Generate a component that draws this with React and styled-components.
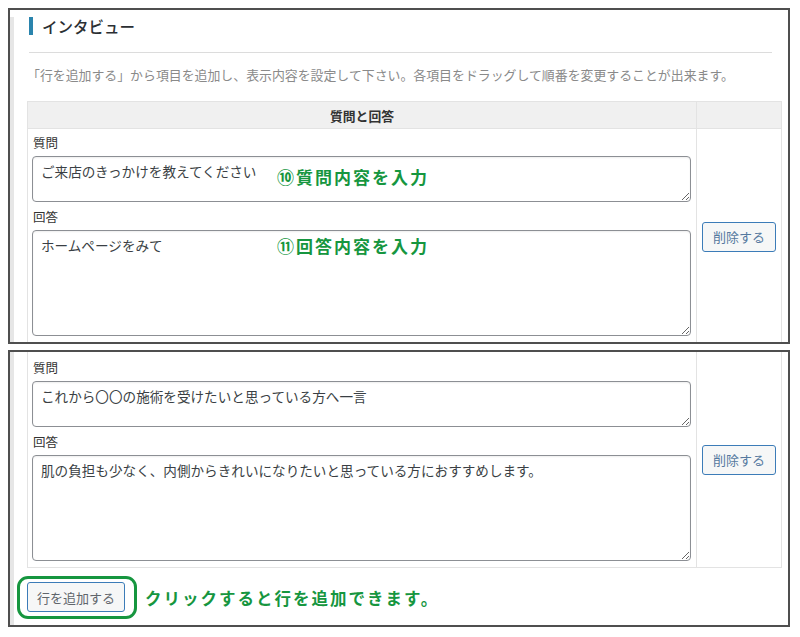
import React from 'react';
import styled, { createGlobalStyle } from 'styled-components';

const GlobalStyle = createGlobalStyle`
  body {
    margin: 0;
    background: #fff;
    font-family: "Noto Sans CJK JP", "Noto Sans", sans-serif;
  }
`;

export default function App() {
  return (
    <>
      <GlobalStyle />
      <Page>
        <Frame height={336}>
          <Inner>
            <Title>
              <TitleBar />
              <TitleText>インタビュー</TitleText>
            </Title>
            <Rule />
            <Description>
              「行を追加する」から項目を追加し、表示内容を設定して下さい。各項目をドラッグして順番を変更することが出来ます。
            </Description>
            <Table>
              <Columns />
              <thead>
                <tr>
                  <HeadCell>質問と回答</HeadCell>
                  <HeadCell />
                </tr>
              </thead>
              <tbody>
                <QaRow
                  question="ご来店のきっかけを教えてください"
                  answer="ホームページをみて"
                  questionNote="⑩質問内容を入力"
                  answerNote="⑪回答内容を入力"
                />
              </tbody>
            </Table>
          </Inner>
        </Frame>

        <Frame height={277}>
          <Inner>
            <Table noTop>
              <Columns />
              <tbody>
                <QaRow
                  lead={8}
                  question="これから〇〇の施術を受けたいと思っている方へ一言"
                  answer="肌の負担も少なく、内側からきれいになりたいと思っている方におすすめします。"
                />
              </tbody>
            </Table>
            <Footer>
              <Ring>
                <Button tone="gray" wide>行を追加する</Button>
              </Ring>
              <FooterNote>クリックすると行を追加できます。</FooterNote>
            </Footer>
          </Inner>
        </Frame>
      </Page>
    </>
  );
}

function Columns() {
  return (
    <colgroup>
      <col style={{ width: 669 }} />
      <col style={{ width: 85 }} />
    </colgroup>
  );
}

function QaRow({ question, answer, questionNote, answerNote, lead = 6 }) {
  return (
    <tr>
      <FieldCell lead={lead}>
        <Label>質問</Label>
        <Field>
          <Area height={46} defaultValue={question} />
          {questionNote && <Note top={11}>{questionNote}</Note>}
        </Field>
        <Label spaced>回答</Label>
        <Field>
          <Area height={106} defaultValue={answer} />
          {answerNote && <Note top={6}>{answerNote}</Note>}
        </Field>
      </FieldCell>
      <ActionCell>
        <Button>削除する</Button>
      </ActionCell>
    </tr>
  );
}

const Page = styled.div`
  padding: 8px;
  display: flex;
  flex-direction: column;
  gap: 6px;
`;

const Frame = styled.div`
  width: 782px;
  height: ${(p) => p.height}px;
  box-sizing: border-box;
  border: 2px solid #4f4f4f;
  overflow: hidden;
  background: #fff;
`;

const Inner = styled.div`
  height: 100%;
  box-sizing: border-box;
  border-left: 4px solid #e6e6e6;
  padding: 0 7px 0 13px;
`;

const Title = styled.div`
  display: flex;
  align-items: center;
  gap: 9px;
  margin: 7px 0 0 2px;
  height: 18px;
`;

const TitleBar = styled.span`
  width: 4px;
  height: 18px;
  background: #2a84ad;
`;

const TitleText = styled.span`
  font-size: 15.5px;
  line-height: 18px;
  font-weight: 500;
  color: #2b2f33;
`;

const Rule = styled.div`
  margin: 17px 9px 0 2px;
  border-top: 1px solid #dcdcdc;
`;

const Description = styled.p`
  margin: 13px 0 0;
  font-size: 12.9px;
  line-height: 18px;
  color: #8a8a8a;
  white-space: nowrap;
`;

const Table = styled.table`
  margin-top: ${(p) => (p.noTop ? 0 : 17)}px;
  width: 754px;
  border-collapse: collapse;
  table-layout: fixed;
  border: 1px solid #e3e3e3;
  border-top: ${(p) => (p.noTop ? 'none' : '1px solid #e3e3e3')};
`;

const HeadCell = styled.th`
  height: 26px;
  padding: 0;
  background: #f0f0f0;
  border: 1px solid #e3e3e3;
  font-size: 12.8px;
  font-weight: 700;
  color: #333;
  text-align: center;
`;

const FieldCell = styled.td`
  padding: ${(p) => p.lead}px 5px ${(p) => 14 - p.lead}px 4px;
  vertical-align: top;
  border-bottom: 1px solid #e3e3e3;
`;

const ActionCell = styled.td`
  padding: 0;
  text-align: center;
  vertical-align: middle;
  border-left: 1px solid #e3e3e3;
  border-bottom: 1px solid #e3e3e3;
`;

const Label = styled.div`
  margin: ${(p) => (p.spaced ? '7px' : '0')} 0 5px 1px;
  font-size: 12.5px;
  line-height: 16px;
  color: #333;
`;

const Field = styled.div`
  position: relative;
`;

const Area = styled.textarea`
  display: block;
  width: 659px;
  height: ${(p) => p.height}px;
  box-sizing: border-box;
  margin: 0;
  padding: 5px 8px;
  border: 1px solid #8c8f94;
  border-radius: 4px;
  box-shadow: inset 0 1px 2px rgba(0, 0, 0, 0.07);
  font-family: inherit;
  font-size: 13.6px;
  line-height: 18px;
  color: #3a3f44;
  background: #fff;
`;

const Note = styled.span`
  position: absolute;
  left: 245px;
  top: ${(p) => p.top}px;
  font-size: 17px;
  line-height: 20px;
  font-weight: 700;
  letter-spacing: 2px;
  color: #16963f;
  pointer-events: none;
  white-space: nowrap;
`;

const Button = styled.button`
  width: ${(p) => (p.wide ? 98 : 74)}px;
  height: 30px;
  padding: 0;
  border: 1px solid #3c7cb8;
  border-radius: 3px;
  background: #f6f7f7;
  font-family: inherit;
  font-size: 13px;
  color: ${(p) => (p.tone === 'gray' ? '#5f656b' : '#55799f')};
  cursor: pointer;
`;

const Footer = styled.div`
  display: flex;
  align-items: center;
  margin: 8px 0 0 -10px;
`;

const Ring = styled.div`
  display: flex;
  padding: 3px 9px 4px 7px;
  border: 3px solid #16963f;
  border-radius: 11px;
`;

const FooterNote = styled.span`
  margin-left: 8px;
  font-size: 16.5px;
  font-weight: 700;
  letter-spacing: 2px;
  color: #16963f;
  white-space: nowrap;
`;
